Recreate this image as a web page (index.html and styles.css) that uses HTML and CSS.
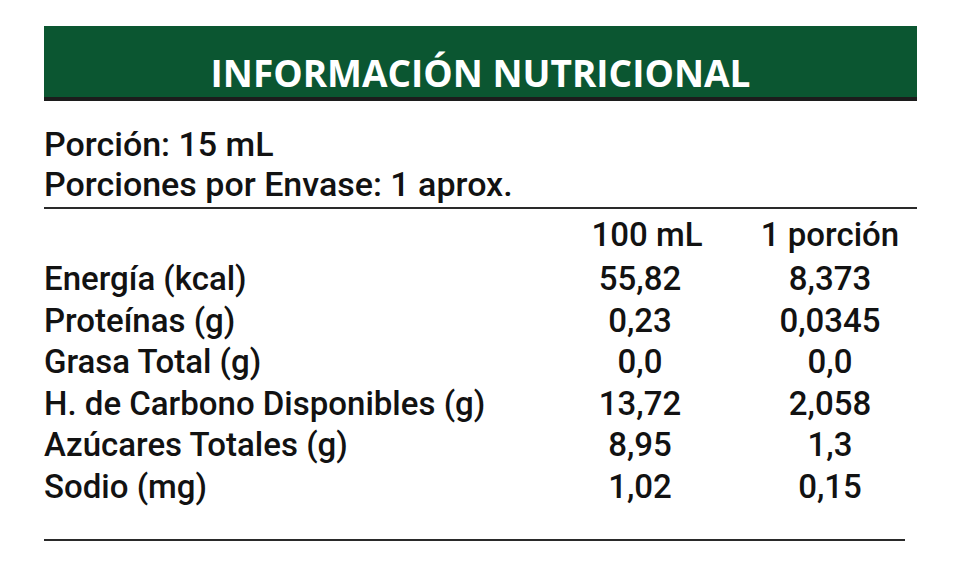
FILE: index.html
```html
<!DOCTYPE html>
<html lang="es">
<head>
<meta charset="utf-8">
<title>Información Nutricional</title>
<link rel="stylesheet" href="styles.css">
</head>
<body>
<div class="label">
  <div class="band"><h1 class="title">INFORMACIÓN NUTRICIONAL</h1></div>
  <div class="serving">
    <div class="line">Porción: 15 mL</div>
    <div class="line">Porciones por Envase: 1 aprox.</div>
  </div>
  <div class="table">
    <div class="cell"></div><div class="cell num head h1">100 mL</div><div class="cell num head">1 porción</div>
    <div class="cell">Energía (kcal)</div><div class="cell num">55,82</div><div class="cell num">8,373</div>
    <div class="cell">Proteínas (g)</div><div class="cell num">0,23</div><div class="cell num">0,0345</div>
    <div class="cell">Grasa Total (g)</div><div class="cell num">0,0</div><div class="cell num">0,0</div>
    <div class="cell">H. de Carbono Disponibles (g)</div><div class="cell num">13,72</div><div class="cell num">2,058</div>
    <div class="cell">Azúcares Totales (g)</div><div class="cell num">8,95</div><div class="cell num">1,3</div>
    <div class="cell">Sodio (mg)</div><div class="cell num">1,02</div><div class="cell num">0,15</div>
  </div>
  <div class="bottom-rule"></div>
</div>
</body>
</html>
```
FILE: styles.css
```css
html, body {
  margin: 0;
  padding: 0;
  background: #ffffff;
}
.label {
  padding: 26px 0 0 44px;
  width: 873px;
  font-family: Roboto, "Liberation Sans", sans-serif;
  font-weight: 500;
  color: #121212;
}
.band {
  height: 75px;
  box-sizing: border-box;
  background: #0b5631;
  border-bottom: 4px solid #1c1c1c;
  padding-top: 21px;
  text-align: center;
}
.title {
  margin: 0;
  font-family: "Open Sans", "Liberation Sans", sans-serif;
  font-weight: 700;
  font-size: 37px;
  line-height: normal;
  color: #ffffff;
  letter-spacing: 0;
}
.serving {
  margin-top: 23px;
  padding-bottom: 3px;
  border-bottom: 2px solid #2a2a2a;
}
.line {
  font-size: 34px;
  line-height: 40px;
}
.table {
  display: grid;
  grid-template-columns: 501px 190px 190px;
  margin-top: 3px;
  font-size: 33px;
  line-height: 41.5px;
}
.cell {
  white-space: nowrap;
}
.num {
  text-align: center;
}
.head {
  line-height: 46px;
}
.h1 {
  padding-left: 14px;
}
.bottom-rule {
  margin-top: 32px;
  width: 861px;
  height: 2px;
  background: #2a2a2a;
}
```
